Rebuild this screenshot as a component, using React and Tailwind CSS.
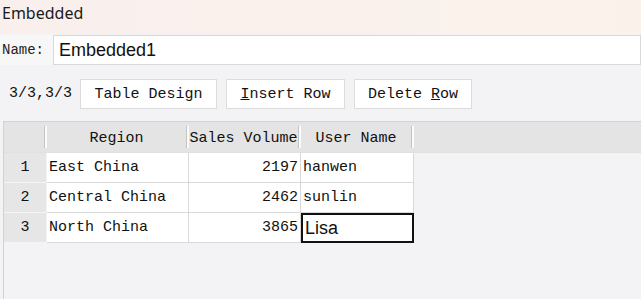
import React from 'react';

const MONO = { fontFamily: '"Liberation Mono", "DejaVu Sans Mono", monospace' };

const rows = [
  { no: 1, region: 'East China', sales: 2197, user: 'hanwen' },
  { no: 2, region: 'Central China', sales: 2462, user: 'sunlin' },
  { no: 3, region: 'North China', sales: 3865, user: 'Lisa', editing: true },
];

function HeaderCell({ width, children }) {
  return (
    <div className={`flex h-full items-center ${width}`}>
      <div className="flex-1 pt-[4px] text-center text-[15px] text-[#111]">{children}</div>
      <div className="h-[22px] w-[3px] border-l border-[#c4c4c4] bg-[#fbfbfb]" />
    </div>
  );
}

function ToolButton({ width, children }) {
  return (
    <button className={`h-[30px] ${width} mr-[9px] border border-[#dcdcdc] bg-white pt-[2px] text-[15px] text-[#111]`}>
      {children}
    </button>
  );
}

export default function App() {
  return (
    <div className="flex h-[299px] w-[641px] flex-col overflow-hidden bg-[#f3f3f5]" style={MONO}>
      <div
        className="flex h-[33px] items-center bg-gradient-to-r from-[#f9efed] to-[#faf2ea] pb-[7px] pl-[2px] text-[16px] text-[#1a1a1a]"
        style={{ fontFamily: '"Noto Sans", "Open Sans", sans-serif' }}
      >
        Embedded
      </div>

      <div className="mt-[2px] flex h-[30px] items-center bg-[#f7f7f8] pl-[2px]">
        <div className="w-[51px] pt-[1px] text-[14px] text-[#222]">Name:</div>
        <div
          className="flex h-[30px] flex-1 items-center border border-[#d9d9d9] bg-white pl-[5px] text-[18px] text-[#111]"
          style={{ fontFamily: '"Liberation Sans", Arial, sans-serif' }}
        >
          Embedded1
        </div>
      </div>

      <div className="mt-[14px] flex h-[30px] items-center">
        <div className="w-[80px] pl-[9px] pt-[1px] text-[15px] text-[#111]">3/3,3/3</div>
        <ToolButton width="w-[137px]">Table Design</ToolButton>
        <ToolButton width="w-[119px]">
          <u>I</u>nsert Row
        </ToolButton>
        <ToolButton width="w-[118px]">
          Delete <u>R</u>ow
        </ToolButton>
      </div>

      <div className="ml-[3px] mt-[12px] flex flex-1 flex-col border-l border-t border-[#d2d2d2]">
        <div className="flex h-[31px] border-b border-[#e0e0e0] bg-[#e4e4e4]">
          <HeaderCell width="w-[43px]" />
          <HeaderCell width="w-[142px]">Region</HeaderCell>
          <HeaderCell width="w-[112px]">Sales Volume</HeaderCell>
          <HeaderCell width="w-[113px]">User Name</HeaderCell>
        </div>
        {rows.map((r) => (
          <div key={r.no} className="flex h-[30px] text-[15px] text-[#111]">
            <div className="flex w-[43px] items-center justify-center border-b border-r border-[#f4f4f4] bg-[#e6e6e6] pt-[2px]">
              {r.no}
            </div>
            <div className="flex w-[142px] items-center border-b border-r border-[#d9d9d9] bg-white pl-[2px] pt-[2px]">
              {r.region}
            </div>
            <div className="flex w-[112px] items-center justify-end border-b border-r border-[#d9d9d9] bg-white pr-[2px] pt-[2px]">
              {r.sales}
            </div>
            {r.editing ? (
              <div
                className="flex w-[113px] items-center border-2 border-[#111] bg-white pl-[2px] text-[18px]"
                style={{ fontFamily: '"Liberation Sans", Arial, sans-serif' }}
              >
                {r.user}
              </div>
            ) : (
              <div className="flex w-[113px] items-center border-b border-r border-[#d9d9d9] bg-white pl-[2px] pt-[2px]">
                {r.user}
              </div>
            )}
          </div>
        ))}
      </div>
    </div>
  );
}
